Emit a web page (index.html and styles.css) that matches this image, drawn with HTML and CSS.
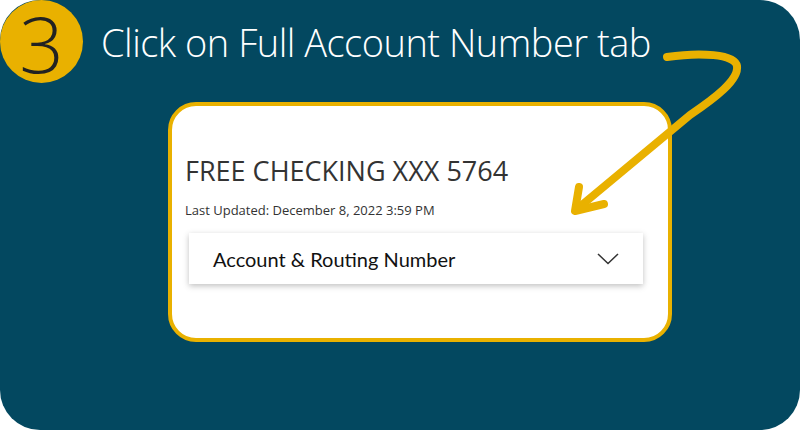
FILE: index.html
```html
<!DOCTYPE html>
<html lang="en">
<head>
    <title>Step 3 - Full Account Number</title>
    <link rel="stylesheet" href="styles.css">
</head>
<body>
    <div class="panel">
        <div class="step-header">
            <div class="step-number"><span>3</span></div>
            <h1 class="step-title">Click on Full Account Number tab</h1>
        </div>
        <div class="account-card">
            <h2 class="account-name">FREE CHECKING XXX 5764</h2>
            <p class="last-updated">Last Updated: December 8, 2022 3:59 PM</p>
            <div class="dropdown">
                <span class="dropdown-label">Account &amp; Routing Number</span>
                <svg class="chevron" width="22" height="12" viewBox="0 0 22 12">
                    <polyline points="1,1 11,10.5 21,1" fill="none" stroke="#333" stroke-width="1.5"/>
                </svg>
            </div>
        </div>
        <!-- hand-drawn pointer arrow -->
        <svg class="pointer-arrow" width="800" height="430" viewBox="0 0 800 430">
            <path d="M667 57 C 700 52, 735 54, 737 66 C 739 80, 715 98, 690 115 L 577 209"
                  fill="none" stroke="#e9b100" stroke-width="8" stroke-linecap="round" stroke-linejoin="round"/>
            <path d="M579 187 L 575 211 L 604 204"
                  fill="none" stroke="#e9b100" stroke-width="8" stroke-linecap="round" stroke-linejoin="round"/>
        </svg>
    </div>
</body>
</html>
```

FILE: styles.css
```css
body {
    margin: 0;
    background: #fff;
    font-family: 'Open Sans', sans-serif;
}
.panel {
    position: relative;
    width: 800px;
    height: 430px;
    background-color: #034860;
    border-radius: 40px;
}
.step-header {
    display: flex;
    align-items: center;
    gap: 18px;
}
.step-number {
    flex: none;
    display: flex;
    align-items: center;
    justify-content: center;
    width: 83px;
    height: 83px;
    border-radius: 50%;
    background-color: #e9b100;
    color: #222;
    font-weight: 300;
    font-size: 78px;
    line-height: 58px;
}
.step-number span {
    margin-top: 3px;
}
.step-title {
    margin: 0;
    color: #fff;
    font-weight: 300;
    font-size: 38px;
    letter-spacing: -0.5px;
    line-height: 1;
}
.account-card {
    box-sizing: border-box;
    width: 504px;
    height: 240px;
    margin: 19px 0 0 168px;
    padding: 47px 25px 0 13px;
    background: #fff;
    border: 4px solid #e9b100;
    border-radius: 28px;
}
.account-name {
    margin: 0;
    color: #333;
    font-weight: 400;
    font-size: 27px;
    line-height: 36px;
}
.last-updated {
    margin: 12px 0 0;
    color: #333;
    font-size: 13px;
    line-height: 18px;
}
.dropdown {
    display: flex;
    align-items: center;
    justify-content: space-between;
    height: 51px;
    margin: 14px 0 0 4px;
    padding: 0 24px;
    background: #fff;
    box-shadow: 0 2px 6px rgba(0, 0, 0, 0.25);
}
.dropdown-label {
    color: #111;
    font-family: 'Lato', sans-serif;
    font-size: 20px;
}
.pointer-arrow {
    position: absolute;
    top: 0;
    left: 0;
}
```
